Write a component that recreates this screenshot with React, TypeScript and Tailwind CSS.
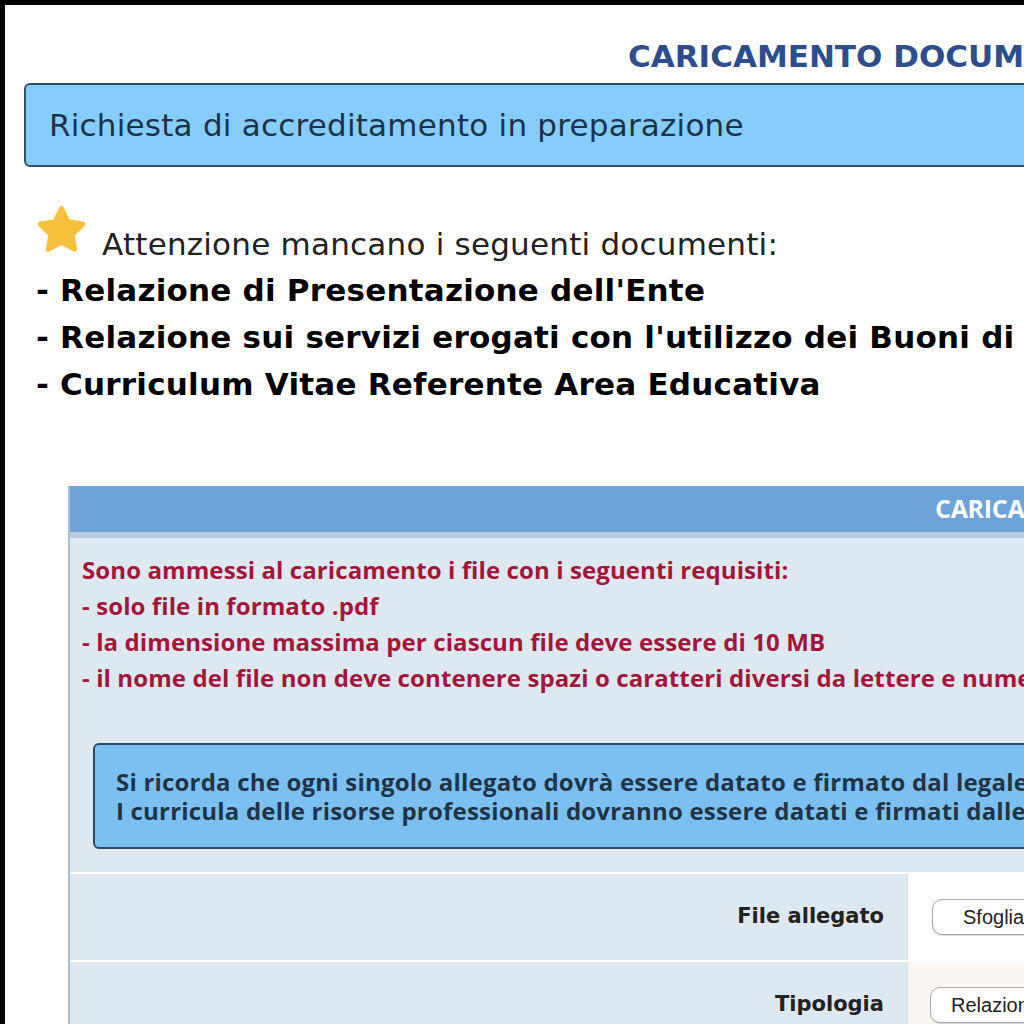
const Star = () => (
  <svg width="49" height="46" viewBox="2.4 2.2 19.2 18.6" className="shrink-0">
    <path
      d="M12 2.2c.4 0 .7.2.9.6l2.4 4.9 5.4.8c.9.1 1.2 1.2.6 1.8l-3.9 3.8.9 5.4c.2.9-.8 1.5-1.5 1.1L12 18l-4.8 2.6c-.8.4-1.7-.2-1.5-1.1l.9-5.4-3.9-3.8c-.6-.6-.3-1.7.6-1.8l5.4-.8 2.4-4.9c.2-.4.5-.6.9-.6z"
      fill="#f6c03a"
    />
  </svg>
);

const missing = [
  "- Relazione di Presentazione dell'Ente",
  "- Relazione sui servizi erogati con l'utilizzo dei Buoni di Servizio",
  "- Curriculum Vitae Referente Area Educativa",
];

const requisiti = [
  "Sono ammessi al caricamento i file con i seguenti requisiti:",
  "- solo file in formato .pdf",
  "- la dimensione massima per ciascun file deve essere di 10 MB",
  "- il nome del file non deve contenere spazi o caratteri diversi da lettere e numeri",
];

export default function App() {
  return (
    <div className="w-[1024px] h-[1024px] overflow-hidden bg-black pt-[5px] pl-[5px]">
      <div className="w-[1700px] h-full bg-white font-['DejaVu_Sans',Verdana,sans-serif] text-[#222]">
        {/* Titolo */}
        <div className="pl-[623px] pt-[34px] mb-[10px] text-[31px] leading-[34px] font-bold text-[#2c4e8c] whitespace-nowrap">
          CARICAMENTO DOCUMENTI
        </div>

        {/* Stato richiesta */}
        <div className="ml-[19px] h-[84px] border-2 border-[#34506c] rounded-[6px] bg-[#87cdfb] flex items-center pl-[23px] text-[31px] tracking-[0.22px] text-[#1a334b] whitespace-nowrap">
          Richiesta di accreditamento in preparazione
        </div>

        {/* Documenti mancanti */}
        <div className="mt-[39px] ml-[32px] flex items-end gap-[16px]">
          <Star />
          <span className="text-[31px] leading-[31px] tracking-[0.22px] -mb-[8px] whitespace-nowrap">
            Attenzione mancano i seguenti documenti:
          </span>
        </div>
        <div className="ml-[31px] mt-[15px] text-[31px] leading-[47px] tracking-[0.22px] font-bold text-black whitespace-nowrap">
          {missing.map((m) => (
            <div key={m}>{m}</div>
          ))}
        </div>

        {/* Tabella caricamento */}
        <div className="ml-[63px] mt-[78px] w-[1500px] border-l-2 border-[#a9bdd6]">
          <div className="h-[46px] bg-[#6ca3d8] flex items-center pl-[865px] text-white font-bold text-[25px] font-['Open_Sans',sans-serif] tracking-[-0.3px] whitespace-nowrap">
            CARICAMENTO DOCUMENTI
          </div>
          <div className="h-[6px] bg-[#b8cce0]" />
          <div className="bg-[#dee8f1] pt-[14px] pb-[23px] font-['Open_Sans',sans-serif] font-bold">
            <div className="pl-[12px] text-[#a3163c] text-[24px] leading-[36px] tracking-[0.1px] whitespace-nowrap">
              {requisiti.map((r) => (
                <div key={r}>{r}</div>
              ))}
            </div>
            <div className="ml-[23px] mt-[47px] h-[106px] border-2 border-[#2f4b68] rounded-[6px] bg-[#7cc0f2] flex flex-col justify-center pl-[21px] text-[#1f3447] text-[24px] leading-[29px] tracking-[0.2px] whitespace-nowrap">
              <div>Si ricorda che ogni singolo allegato dovrà essere datato e firmato dal legale rappresentante dell'Ente.</div>
              <div>I curricula delle risorse professionali dovranno essere datati e firmati dalle risorse stesse.</div>
            </div>
          </div>

          <div className="grid grid-cols-[836px_1fr] border-t-2 border-white">
            <div className="h-[86px] bg-[#dee8f1] flex items-center justify-end pr-[22px] text-[21px] font-bold text-[#222]">
              File allegato
            </div>
            <div className="bg-white border-l-2 border-[#d6e2ee] flex items-center pl-[24px]">
              <button className="h-[36px] px-[30px] rounded-[10px] border border-[#a8a8a8] bg-white text-[20px] font-['Liberation_Sans',Arial,sans-serif] text-[#222] shadow-[0_1px_1px_rgba(0,0,0,0.15)] whitespace-nowrap">
                Sfoglia...
              </button>
            </div>
          </div>
          <div className="grid grid-cols-[836px_1fr] border-t-2 border-white">
            <div className="h-[86px] bg-[#dee8f1] flex items-center justify-end pr-[22px] text-[21px] font-bold text-[#222]">
              Tipologia
            </div>
            <div className="bg-[#fbf7f4] border-l-2 border-[#d6e2ee] flex items-center pl-[22px]">
              <button className="h-[36px] px-[20px] rounded-[10px] border border-[#a8a8a8] bg-white text-[20px] font-['Liberation_Sans',Arial,sans-serif] text-[#222] shadow-[0_1px_1px_rgba(0,0,0,0.15)] whitespace-nowrap">
                Relazione di Presentazione dell'Ente
              </button>
            </div>
          </div>
        </div>
      </div>
    </div>
  );
}
